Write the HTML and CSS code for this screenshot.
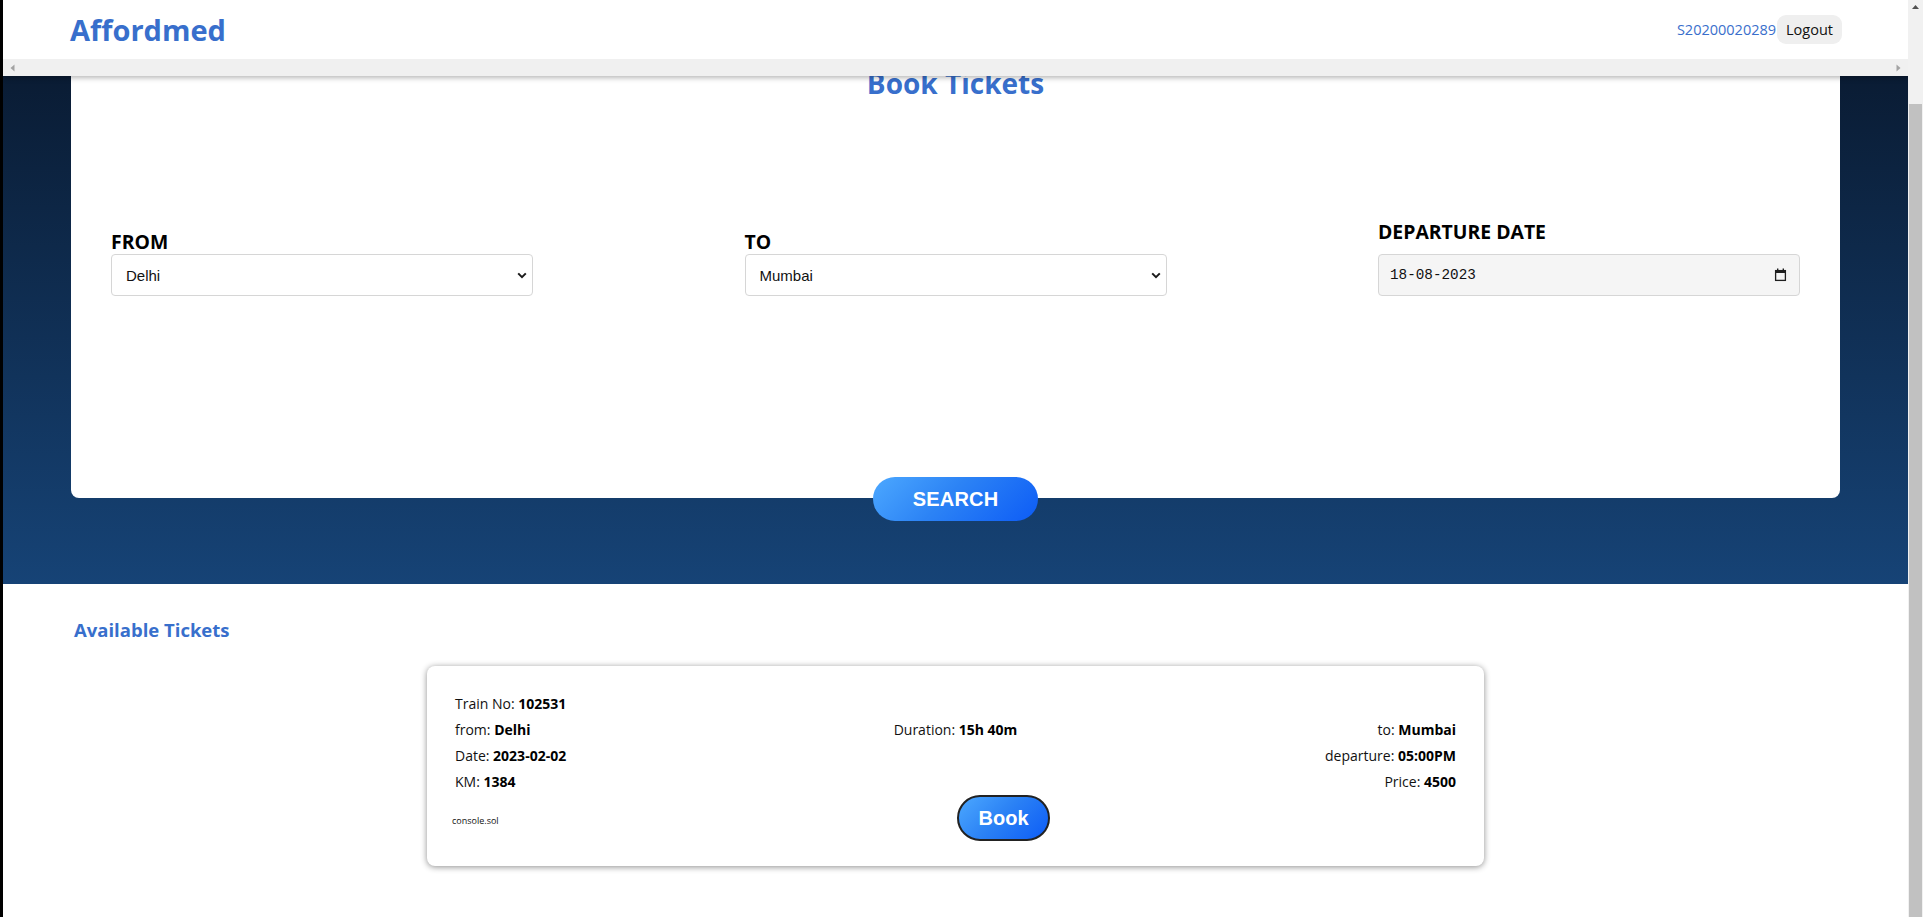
FILE: index.html
```html
<!DOCTYPE html>
<html lang="en">
<head>
<meta charset="utf-8">
<title>Affordmed - Book Tickets</title>
<link rel="stylesheet" href="styles.css">
</head>
<body>
<div class="window">
  <div class="viewport">
    <header class="topbar">
      <div class="topbar-main">
        <a class="brand" href="#">Affordmed</a>
        <div class="user">
          <span class="uid">S20200020289</span>
          <button class="logout" type="button">Logout</button>
        </div>
      </div>
      <div class="hscroll">
        <svg class="arrow" width="5" height="8" viewBox="0 0 5 8"><path d="M4.5 0.5 L0.5 4 L4.5 7.5 Z" fill="#a3a3a3"/></svg>
        <svg class="arrow" width="5" height="8" viewBox="0 0 5 8"><path d="M0.5 0.5 L4.5 4 L0.5 7.5 Z" fill="#a3a3a3"/></svg>
      </div>
    </header>

    <section class="hero">
      <div class="search-card">
        <h2 class="title">Book Tickets</h2>
        <div class="fields">
          <div class="field">
            <label class="field-label" for="from">FROM</label>
            <div class="select-wrap">
              <select id="from" class="select">
                <option>Delhi</option>
                <option>Mumbai</option>
              </select>
              <svg class="chevron" width="10" height="7" viewBox="0 0 10 7"><path d="M1.2 1.4 L5 5.2 L8.8 1.4" fill="none" stroke="#1a1a1a" stroke-width="2"/></svg>
            </div>
          </div>
          <div class="field">
            <label class="field-label" for="to">TO</label>
            <div class="select-wrap">
              <select id="to" class="select">
                <option>Mumbai</option>
                <option>Delhi</option>
              </select>
              <svg class="chevron" width="10" height="7" viewBox="0 0 10 7"><path d="M1.2 1.4 L5 5.2 L8.8 1.4" fill="none" stroke="#1a1a1a" stroke-width="2"/></svg>
            </div>
          </div>
          <div class="field">
            <label class="field-label field-label-date">DEPARTURE DATE</label>
            <div class="date-input">
              <span class="date-value">18-08-2023</span>
              <svg class="calendar" width="13" height="14" viewBox="0 0 13 14"><rect x="1.6" y="2.6" width="9.8" height="9.8" fill="none" stroke="#1f1f1f" stroke-width="1.3"/><rect x="1" y="2" width="11" height="3" fill="#1f1f1f"/><rect x="3" y="0.5" width="1.4" height="2" fill="#1f1f1f"/><rect x="8.6" y="0.5" width="1.4" height="2" fill="#1f1f1f"/></svg>
            </div>
          </div>
        </div>
      </div>
      <button class="search-btn" type="button">SEARCH</button>
    </section>

    <section class="results">
      <h3 class="results-title">Available Tickets</h3>
      <div class="ticket">
        <div class="ticket-grid">
          <div class="cell left">Train No: <b>102531</b></div>
          <div class="cell mid"></div>
          <div class="cell right"></div>

          <div class="cell left">from: <b>Delhi</b></div>
          <div class="cell mid">Duration: <b>15h 40m</b></div>
          <div class="cell right">to: <b>Mumbai</b></div>

          <div class="cell left">Date: <b>2023-02-02</b></div>
          <div class="cell mid"></div>
          <div class="cell right">departure: <b>05:00PM</b></div>

          <div class="cell left">KM: <b>1384</b></div>
          <div class="cell mid"></div>
          <div class="cell right">Price: <b>4500</b></div>
        </div>
        <div class="ticket-foot">
          <span class="console">console.sol</span>
          <button class="book-btn" type="button">Book</button>
        </div>
      </div>
    </section>
  </div>

  <div class="vscroll">
    <div class="vs-arrow">
      <svg width="7" height="4" viewBox="0 0 7 4"><path d="M0 4 L3.5 0 L7 4 Z" fill="#505050"/></svg>
    </div>
    <div class="vs-gap"></div>
    <div class="vs-thumb"></div>
  </div>
</div>
</body>
</html>
```

FILE: styles.css
```css
* {
  box-sizing: border-box;
}

html, body {
  margin: 0;
  padding: 0;
  height: 917px;
  overflow: hidden;
  background: #ffffff;
  font-family: "Open Sans", "Noto Sans", sans-serif;
  color: #111;
}

.window {
  display: flex;
  height: 917px;
}

.viewport {
  flex: 1;
  position: relative;
  overflow: hidden;
  border-left: 3px solid #000;
  background: #fff;
}

/* ---------- header ---------- */
.topbar {
  position: absolute;
  top: 0;
  left: 0;
  right: 0;
  z-index: 10;
  background: #fff;
  box-shadow: 0 2px 5px rgba(0, 0, 0, 0.28);
}

.topbar-main {
  height: 59px;
  display: flex;
  align-items: center;
  justify-content: space-between;
  padding: 0 66px 0 67px;
}

.brand {
  font-size: 29px;
  font-weight: 700;
  color: #386fcc;
  text-decoration: none;
}

.user {
  display: flex;
  align-items: center;
}

.uid {
  font-size: 14.5px;
  color: #3a6fcc;
}

.logout {
  margin-left: 1px;
  height: 29px;
  padding: 0 9px;
  border: none;
  border-radius: 9px;
  background: #efefef;
  font-family: "Open Sans", sans-serif;
  font-size: 14.5px;
  color: #111;
}

.hscroll {
  height: 17px;
  background: #f0f0f0;
  display: flex;
  align-items: center;
  justify-content: space-between;
  padding: 0 7px 0 7px;
}

.arrow {
  display: block;
}

/* ---------- hero / search ---------- */
.hero {
  display: flex;
  flex-direction: column;
  padding: 40px 68px 63px;
  background: linear-gradient(180deg, #08162a 0%, #164376 100%);
}

.search-card {
  background: #fff;
  border-radius: 8px;
  padding: 26px 40px 202px;
}

.title {
  margin: 0;
  text-align: center;
  font-size: 28px;
  line-height: 34px;
  font-weight: 700;
  color: #386fcc;
}

.fields {
  margin-top: 120px;
  display: flex;
  justify-content: space-between;
  align-items: flex-end;
}

.field {
  width: 422px;
  display: flex;
  flex-direction: column;
}

.field-label {
  font-size: 19.4px;
  line-height: 24px;
  font-weight: 700;
  color: #000;
}

.field-label-date {
  margin-bottom: 10px;
}

.select-wrap {
  position: relative;
}

.select {
  display: block;
  width: 100%;
  height: 42px;
  padding: 0 30px 0 14px;
  border: 1px solid #d6d6d6;
  border-radius: 4px;
  background: #fff;
  font-family: "Liberation Sans", Arial, sans-serif;
  font-size: 15px;
  color: #111;
  appearance: none;
  -webkit-appearance: none;
}

.chevron {
  position: absolute;
  right: 6px;
  top: 18px;
  pointer-events: none;
}

.date-input {
  height: 42px;
  display: flex;
  align-items: center;
  justify-content: space-between;
  padding: 0 12px 0 11px;
  border: 1px solid #d6d6d6;
  border-radius: 4px;
  background: #f5f5f5;
}

.date-value {
  font-family: "Liberation Mono", "DejaVu Sans Mono", monospace;
  font-size: 14.3px;
  color: #111;
}

.calendar {
  display: block;
}

.search-btn {
  align-self: center;
  margin-top: -21px;
  width: 165px;
  height: 44px;
  border: none;
  border-radius: 22px;
  background: linear-gradient(135deg, #4ca8ff 0%, #2c83f5 45%, #0d5cf6 100%);
  color: #fff;
  font-family: "Liberation Sans", Arial, sans-serif;
  font-size: 20px;
  font-weight: 700;
  letter-spacing: 0.2px;
}

/* ---------- results ---------- */
.results {
  padding-top: 34px;
}

.results-title {
  margin: 0;
  padding-left: 71px;
  font-size: 18.5px;
  line-height: 24px;
  font-weight: 700;
  color: #386fcc;
}

.ticket {
  width: 1057px;
  margin: 24px auto 0;
  padding: 25px 25px 25px;
  background: #fff;
  border-radius: 8px;
  box-shadow: 0 1px 6px rgba(0, 0, 0, 0.45);
}

.ticket-grid {
  display: grid;
  grid-template-columns: 1fr 1fr 1fr;
  padding: 0 3px;
  font-size: 14px;
  line-height: 26px;
  color: #111;
}

.ticket-grid b {
  font-weight: 700;
  color: #000;
}

.cell {
  height: 26px;
  white-space: nowrap;
}

.left {
  text-align: left;
}

.mid {
  text-align: center;
}

.right {
  text-align: right;
}

.ticket-foot {
  display: flex;
  align-items: center;
}

.console {
  flex: 0 0 505px;
  font-size: 9px;
  color: #111;
  padding-top: 5px;
}

.book-btn {
  width: 93px;
  height: 46px;
  border: 2px solid #222;
  border-radius: 23px;
  background: linear-gradient(135deg, #4ca8ff 0%, #2c83f5 45%, #0d5cf6 100%);
  color: #fff;
  font-family: "Liberation Sans", Arial, sans-serif;
  font-size: 20px;
  font-weight: 700;
}

/* ---------- fake vertical scrollbar ---------- */
.vscroll {
  width: 15px;
  background: #f1f1f1;
  display: flex;
  flex-direction: column;
}

.vs-arrow {
  height: 17px;
  display: flex;
  align-items: center;
  justify-content: center;
}

.vs-arrow svg {
  display: block;
  margin-top: -3px;
}

.vs-gap {
  height: 87px;
}

.vs-thumb {
  flex: 1;
  margin: 0 1px;
  background: #c1c1c1;
}
```
